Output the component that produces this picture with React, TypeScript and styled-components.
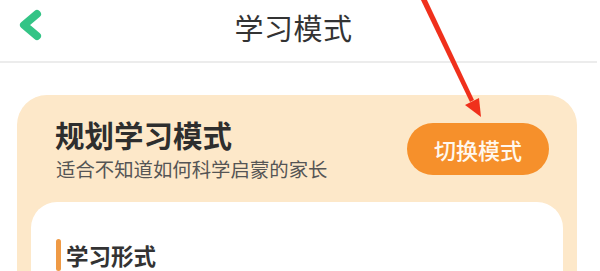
import React from "react";
import styled, { createGlobalStyle } from "styled-components";

const Global = createGlobalStyle`
  html, body { margin: 0; padding: 0; background: #ffffff; }
  body { font-family: "Noto Sans CJK SC", "Noto Sans", sans-serif; overflow: hidden; }
`;

const Page = styled.div`
  position: relative;
  width: 600px;
  height: 271px;
  overflow: hidden;
  background: #ffffff;
`;

const NavBar = styled.header`
  height: 61px;
  display: flex;
  align-items: center;
  justify-content: center;
  position: relative;
  border-bottom: 2px solid #ececec;
  margin-right: 3px;
`;

const BackButton = styled.button`
  position: absolute;
  left: 14px;
  top: 8px;
  width: 34px;
  height: 36px;
  border: 0;
  padding: 0;
  background: transparent;
  display: flex;
  align-items: center;
  justify-content: center;
`;

const NavTitle = styled.h1`
  margin: 0 10px 8px 0;
  font-size: 29px;
  font-weight: 400;
  color: #333333;
  letter-spacing: 0.5px;
`;

const Content = styled.main`
  padding: 32px 23px 0 17px;
`;

const ModeCard = styled.section`
  background: #fde8c9;
  border-radius: 30px;
  padding-bottom: 20px;
`;

const ModeHeader = styled.div`
  display: flex;
  align-items: center;
  justify-content: space-between;
  padding: 22px 28px 21px 38px;
`;

const ModeText = styled.div`
  display: flex;
  flex-direction: column;
  gap: 4px;
`;

const ModeTitle = styled.h2`
  margin: 0;
  font-size: 29.5px;
  line-height: 35px;
  font-weight: 700;
  color: #2e2e2e;
`;

const ModeSub = styled.p`
  margin: 0 0 0 1px;
  font-size: 19.4px;
  line-height: 25px;
  color: #555555;
`;

const SwitchButton = styled.button`
  width: 142px;
  height: 52px;
  border: 0;
  border-radius: 26px;
  background: #f6902b;
  color: #fff8ef;
  font-family: inherit;
  font-size: 22px;
  font-weight: 500;
  padding: 0;
`;

const InnerCard = styled.div`
  margin: 0 14px;
  background: #ffffff;
  border-radius: 26px;
  padding: 37px 25px 20px;
  height: 160px;
`;

const SectionTitle = styled.div`
  display: flex;
  align-items: flex-start;
  gap: 5px;
`;

const SectionBar = styled.span`
  width: 5px;
  height: 32px;
  border-radius: 3px;
  background: #ef9a45;
`;

const SectionLabel = styled.span`
  font-size: 22.5px;
  line-height: 30px;
  font-weight: 700;
  color: #333333;
  margin-top: 1px;
`;

const Arrow = styled.svg`
  position: absolute;
  left: 0;
  top: 0;
  pointer-events: none;
`;

export default function App() {
  return (
    <>
      <Global />
      <Page>
        <NavBar>
          <BackButton aria-label="返回">
            <svg width="34" height="36" viewBox="0 0 34 36">
              <polyline
                points="23,6 10,17 23,28"
                fill="none"
                stroke="#33c486"
                strokeWidth="8"
                strokeLinecap="round"
                strokeLinejoin="round"
              />
            </svg>
          </BackButton>
          <NavTitle>学习模式</NavTitle>
        </NavBar>
        <Content>
          <ModeCard>
            <ModeHeader>
              <ModeText>
                <ModeTitle>规划学习模式</ModeTitle>
                <ModeSub>适合不知道如何科学启蒙的家长</ModeSub>
              </ModeText>
              <SwitchButton>切换模式</SwitchButton>
            </ModeHeader>
            <InnerCard>
              <SectionTitle>
                <SectionBar />
                <SectionLabel>学习形式</SectionLabel>
              </SectionTitle>
            </InnerCard>
          </ModeCard>
        </Content>
        <Arrow width="600" height="271" viewBox="0 0 600 271">
          <polygon points="420,-2 426,-2 474,100 470,102" fill="#f0301c" />
          <polygon points="481,117 465,105 479,98" fill="#f0301c" />
        </Arrow>
      </Page>
    </>
  );
}
